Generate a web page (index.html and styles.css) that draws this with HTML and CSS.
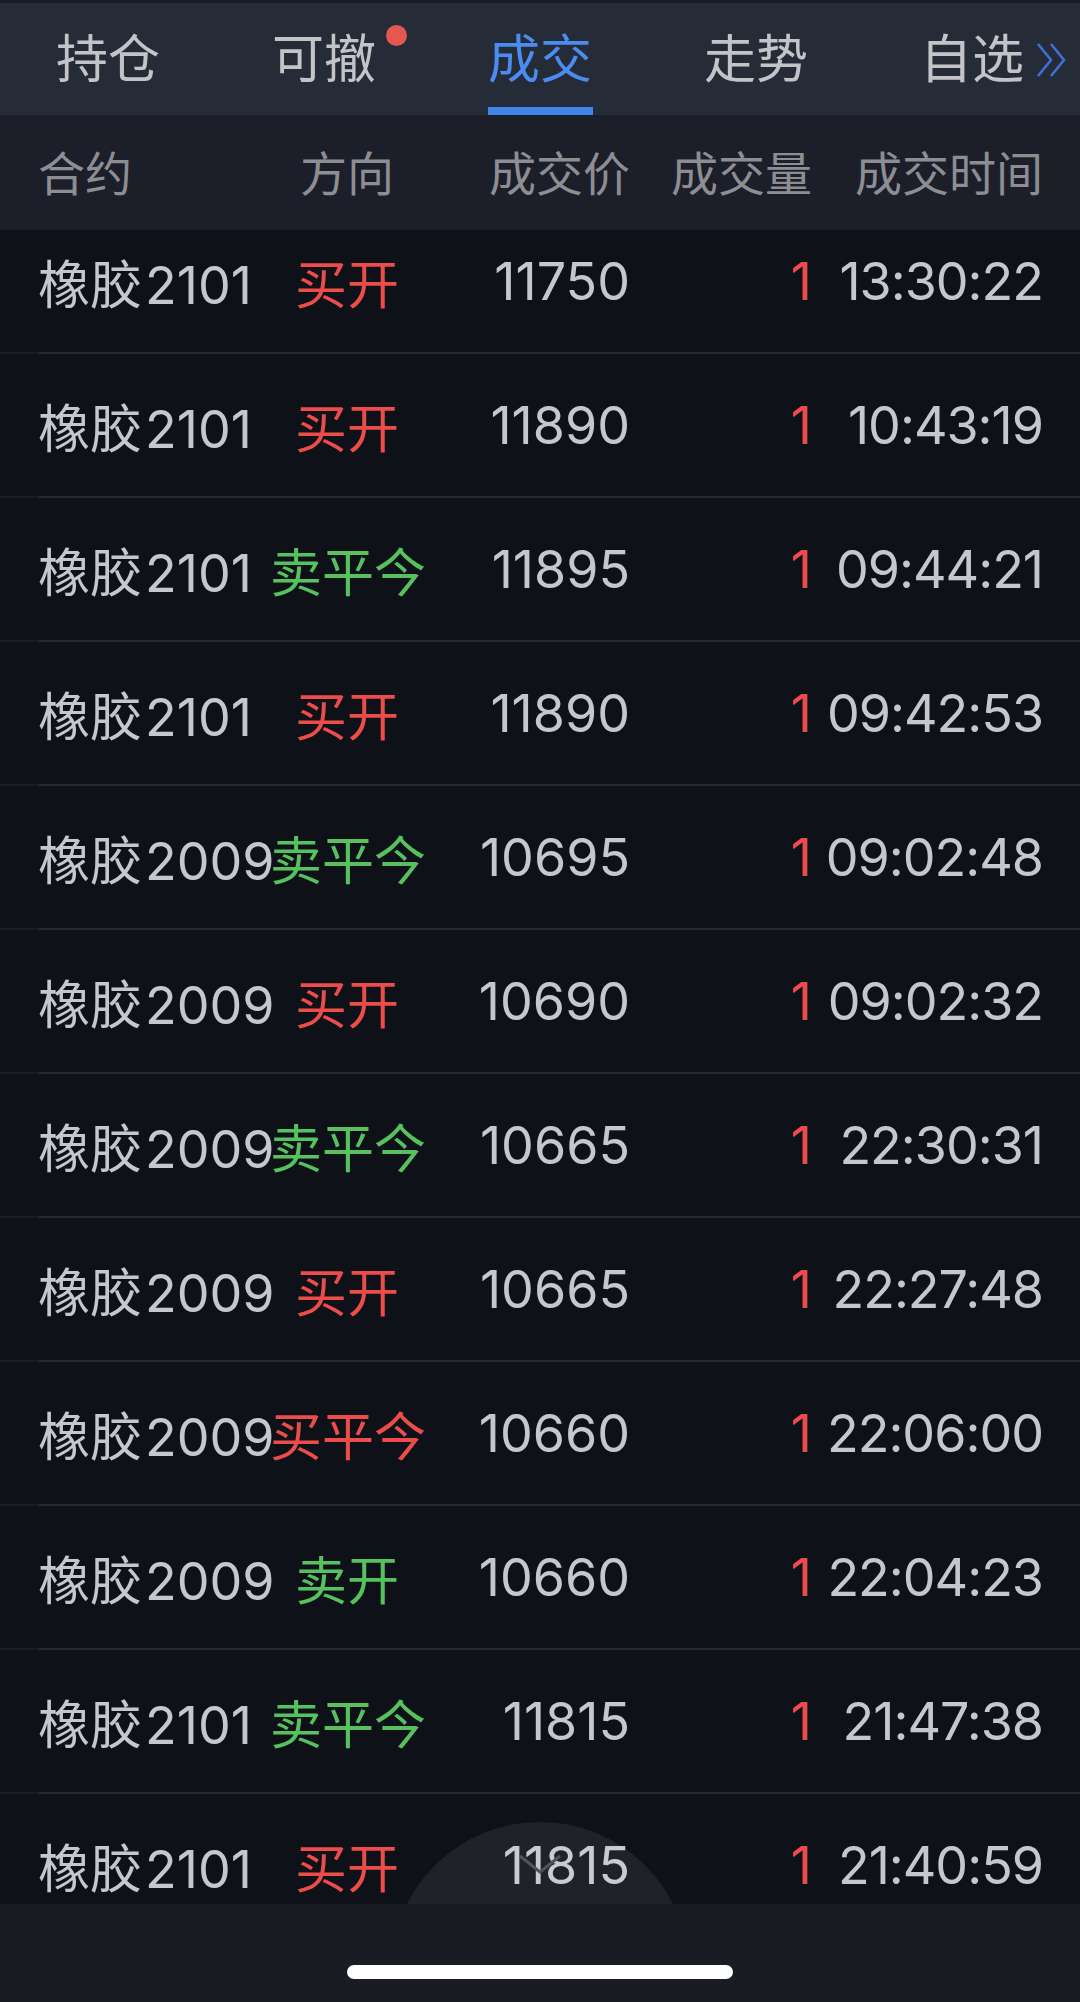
FILE: index.html
```html
<!DOCTYPE html>
<html lang="zh-CN">
<head>
    <meta charset="UTF-8">
    <meta name="viewport" content="width=device-width, initial-scale=1.0">
    <title>成交</title>
    <link rel="stylesheet" href="styles.css">
</head>
<body>
    <div class="tabs">
        <div class="tab">持仓</div>
        <div class="tab">可撤<span class="dot"></span></div>
        <div class="tab active">成交</div>
        <div class="tab">走势</div>
        <div class="tab">自选
            <svg class="more" width="34" height="38" viewBox="0 0 34 38">
                <polyline points="3,3 16,19 3,35" fill="none" stroke="#3f6fd8" stroke-width="2.6"/>
                <polyline points="16,3 29,19 16,35" fill="none" stroke="#3f6fd8" stroke-width="2.6"/>
            </svg>
        </div>
    </div>

    <div class="head row-grid">
        <div class="c-name">合约</div>
        <div class="c-dir">方向</div>
        <div class="c-price">成交价</div>
        <div class="c-qty">成交量</div>
        <div class="c-time">成交时间</div>
    </div>

    <div class="list">
        <div class="rows">
            <div class="row row-grid"><div class="c-name">橡胶<span class="code">2101</span></div><div class="c-dir red">买开</div><div class="c-price">11750</div><div class="c-qty">1</div><div class="c-time">13:30:22</div></div>
            <div class="row row-grid"><div class="c-name">橡胶<span class="code">2101</span></div><div class="c-dir red">买开</div><div class="c-price">11890</div><div class="c-qty">1</div><div class="c-time">10:43:19</div></div>
            <div class="row row-grid"><div class="c-name">橡胶<span class="code">2101</span></div><div class="c-dir green">卖平今</div><div class="c-price">11895</div><div class="c-qty">1</div><div class="c-time">09:44:21</div></div>
            <div class="row row-grid"><div class="c-name">橡胶<span class="code">2101</span></div><div class="c-dir red">买开</div><div class="c-price">11890</div><div class="c-qty">1</div><div class="c-time">09:42:53</div></div>
            <div class="row row-grid"><div class="c-name">橡胶<span class="code">2009</span></div><div class="c-dir green">卖平今</div><div class="c-price">10695</div><div class="c-qty">1</div><div class="c-time">09:02:48</div></div>
            <div class="row row-grid"><div class="c-name">橡胶<span class="code">2009</span></div><div class="c-dir red">买开</div><div class="c-price">10690</div><div class="c-qty">1</div><div class="c-time">09:02:32</div></div>
            <div class="row row-grid"><div class="c-name">橡胶<span class="code">2009</span></div><div class="c-dir green">卖平今</div><div class="c-price">10665</div><div class="c-qty">1</div><div class="c-time">22:30:31</div></div>
            <div class="row row-grid"><div class="c-name">橡胶<span class="code">2009</span></div><div class="c-dir red">买开</div><div class="c-price">10665</div><div class="c-qty">1</div><div class="c-time">22:27:48</div></div>
            <div class="row row-grid"><div class="c-name">橡胶<span class="code">2009</span></div><div class="c-dir red">买平今</div><div class="c-price">10660</div><div class="c-qty">1</div><div class="c-time">22:06:00</div></div>
            <div class="row row-grid"><div class="c-name">橡胶<span class="code">2009</span></div><div class="c-dir green">卖开</div><div class="c-price">10660</div><div class="c-qty">1</div><div class="c-time">22:04:23</div></div>
            <div class="row row-grid"><div class="c-name">橡胶<span class="code">2101</span></div><div class="c-dir green">卖平今</div><div class="c-price">11815</div><div class="c-qty">1</div><div class="c-time">21:47:38</div></div>
            <div class="row row-grid"><div class="c-name">橡胶<span class="code">2101</span></div><div class="c-dir red">买开</div><div class="c-price">11815</div><div class="c-qty">1</div><div class="c-time">21:40:59</div></div>
        </div>
        <div class="float-btn">
            <svg width="44" height="22" viewBox="0 0 44 22">
                <polyline points="2,3 22,19 42,3" fill="none" stroke="#50535b" stroke-width="3"/>
            </svg>
        </div>
    </div>

    <div class="bottom">
        <div class="home-bar"></div>
    </div>
</body>
</html>
```

FILE: styles.css
```css
body {
    margin: 0;
    width: 1080px;
    height: 2002px;
    overflow: hidden;
    background: #0f1118;
    color: #c6c7cb;
    font-family: "Inter", "Noto Sans CJK SC", sans-serif;
    display: flex;
    flex-direction: column;
}

.tabs {
    height: 112px;
    border-top: 3px solid #1a1d25;
    background: #262b38;
    display: grid;
    grid-template-columns: repeat(5, 1fr);
}

.tab {
    position: relative;
    display: flex;
    justify-content: center;
    align-items: center;
    padding-bottom: 8px;
    font-size: 52px;
    color: #c3c4c8;
}

.tab.active {
    color: #4a8cf0;
}

.tab.active::after {
    content: "";
    position: absolute;
    left: 56px;
    right: 55px;
    bottom: 0;
    height: 8px;
    background: #3f86e8;
}

.tab .dot {
    position: absolute;
    left: 170px;
    top: 22px;
    width: 21px;
    height: 21px;
    border-radius: 50%;
    background: #e5574f;
}

.tab .more {
    position: absolute;
    right: 11px;
    top: 38px;
}

.row-grid {
    display: grid;
    grid-template-columns: 232px 154px 206px 182px 231px;
    padding: 0 37px 0 38px;
    align-items: center;
    white-space: nowrap;
}

.head {
    height: 115px;
    background: #1c1f29;
    font-size: 47px;
    color: #8c8e94;
    box-sizing: border-box;
    padding-bottom: 4px;
}

.c-name { text-align: left; }
.c-dir { text-align: center; }
.c-price, .c-qty, .c-time { text-align: right; }

.row .c-time {
    letter-spacing: -1px;
}

.code {
    margin-left: 3px;
}

.list {
    position: relative;
    height: 1674px;
    overflow: hidden;
}

.rows {
    margin-top: -20px;
}

.row {
    height: 144px;
    box-sizing: border-box;
    border-bottom: 2px solid;
    border-image: linear-gradient(to right, #1a1d24 40px, #262a33 40px) 1;
    font-size: 52px;
}

.row .c-qty {
    color: #ec4d4b;
}

.red { color: #ec4d4b; }
.green { color: #55c25e; }

.float-btn {
    position: absolute;
    left: 391px;
    top: 1592px;
    width: 298px;
    height: 298px;
    border-radius: 50%;
    background: rgba(255, 255, 255, 0.075);
    display: flex;
    justify-content: center;
    padding-top: 31px;
    box-sizing: border-box;
}

.bottom {
    flex: 1;
    background: #1a1c23;
    display: flex;
    justify-content: center;
    padding-top: 61px;
}

.home-bar {
    width: 386px;
    height: 14px;
    border-radius: 7px;
    background: #ffffff;
}
```
